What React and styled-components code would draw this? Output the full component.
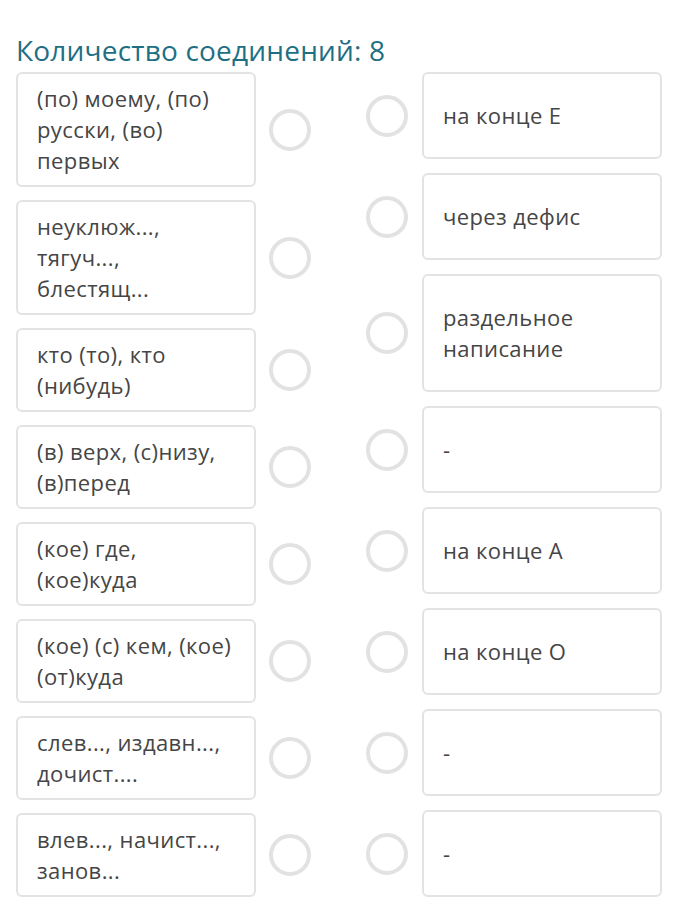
import styled, { createGlobalStyle } from 'styled-components'

const GlobalStyle = createGlobalStyle`
  body {
    margin: 0;
    background: #ffffff;
    font-family: "Open Sans", "Noto Sans", sans-serif;
  }
`

const leftItems = [
  '(по) моему, (по) русски, (во) первых',
  'неуклюж..., тягуч..., блестящ...',
  'кто (то), кто (нибудь)',
  '(в) верх, (с)низу, (в)перед',
  '(кое) где, (кое)куда',
  '(кое) (с) кем, (кое) (от)куда',
  'слев..., издавн..., дочист....',
  'влев..., начист..., занов...',
]

const rightItems = [
  'на конце Е',
  'через дефис',
  'раздельное написание',
  '-',
  'на конце А',
  'на конце О',
  '-',
  '-',
]

const App = () => {
  return (
    <Page>
      <GlobalStyle />
      <Title>Количество соединений: 8</Title>
      <Columns>
        <Stack $gap={13}>
          {leftItems.map((text) => (
            <Row key={text}>
              <LeftCard>{text}</LeftCard>
              <Radio />
            </Row>
          ))}
        </Stack>
        <Stack $gap={14}>
          {rightItems.map((text, i) => (
            <Row key={i} $gap={14}>
              <Radio />
              <RightCard>{text}</RightCard>
            </Row>
          ))}
        </Stack>
      </Columns>
    </Page>
  )
}

const Page = styled.div`
  padding: 32px 16px 20px;
  width: 699px;
  box-sizing: border-box;
`

const Title = styled.h1`
  margin: 0 0 4px;
  font-size: 28px;
  font-weight: 400;
  letter-spacing: 0.2px;
  line-height: 36px;
  color: #1f6f84;
`

const Columns = styled.div`
  display: flex;
  gap: 55px;
  align-items: flex-start;
`

const Stack = styled.div`
  display: flex;
  flex-direction: column;
  gap: ${(p) => p.$gap}px;
`

const Row = styled.div`
  display: flex;
  align-items: center;
  gap: ${(p) => p.$gap || 13}px;
`

const Card = styled.div`
  width: 240px;
  box-sizing: border-box;
  border: 2px solid #e3e3e3;
  border-radius: 6px;
  background: #fff;
  color: #454545;
  font-size: 22px;
  letter-spacing: 0.4px;
  line-height: 31px;
  padding: 9px 19px;
`

const LeftCard = styled(Card)``

const RightCard = styled(Card)`
  padding: 26px 19px;
  min-height: 87px;
`

const Radio = styled.div`
  width: 42px;
  height: 42px;
  box-sizing: border-box;
  border: 4px solid #e2e2e2;
  border-radius: 50%;
  flex-shrink: 0;
`

export default App
